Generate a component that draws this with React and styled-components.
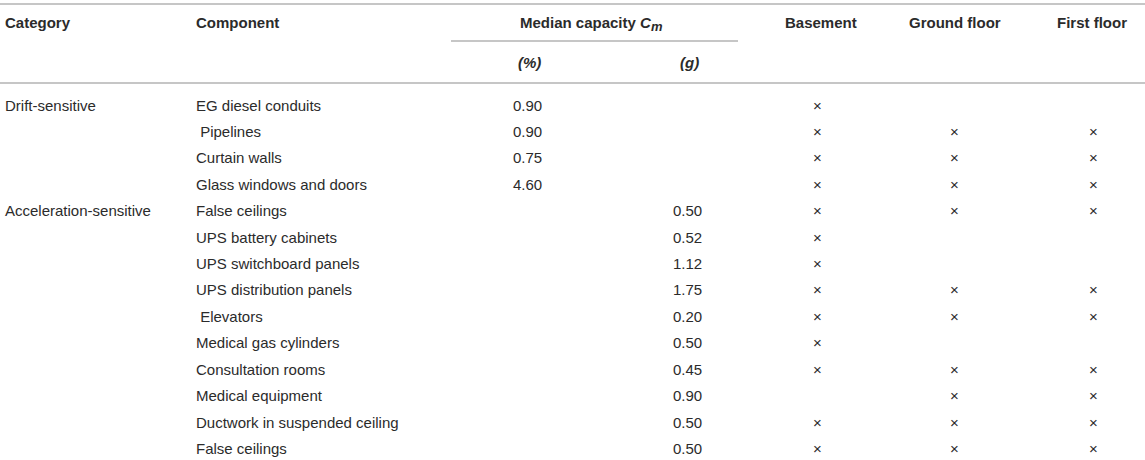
import styled, { createGlobalStyle } from 'styled-components'

const GlobalStyle = createGlobalStyle`
  html, body {
    margin: 0;
    padding: 0;
    background: #ffffff;
  }
  body {
    font-family: "Liberation Sans", Arial, sans-serif;
    color: #2b2b2b;
  }
`

const X = '\u00d7'

const COLS = [
  { width: 196, pad: 5 },
  { width: 255, pad: 0 },
  { width: 144, pad: 62 },
  { width: 143, pad: 78 },
  { width: 142, pad: 75 },
  { width: 160, pad: 70 },
  { width: 105, pad: 49 },
]

const HEAD_PAD = [5, 0, 67, 85, 47, 29, 17]

const rows = [
  ['Drift-sensitive', 'EG diesel conduits', '0.90', '', X, '', ''],
  ['', '\u00a0Pipelines', '0.90', '', X, X, X],
  ['', 'Curtain walls', '0.75', '', X, X, X],
  ['', 'Glass windows and doors', '4.60', '', X, X, X],
  ['Acceleration-sensitive', 'False ceilings', '', '0.50', X, X, X],
  ['', 'UPS battery cabinets', '', '0.52', X, '', ''],
  ['', 'UPS switchboard panels', '', '1.12', X, '', ''],
  ['', 'UPS distribution panels', '', '1.75', X, X, X],
  ['', '\u00a0Elevators', '', '0.20', X, X, X],
  ['', 'Medical gas cylinders', '', '0.50', X, '', ''],
  ['', 'Consultation rooms', '', '0.45', X, X, X],
  ['', 'Medical equipment', '', '0.90', '', X, X],
  ['', 'Ductwork in suspended ceiling', '', '0.50', X, X, X],
  ['', 'False ceilings', '', '0.50', X, X, X],
]

const Page = styled.div`
  padding-top: 3px;
`

const Table = styled.table`
  width: 1145px;
  table-layout: fixed;
  border-collapse: collapse;
  font-size: 15px;
`

const HeadRow = styled.tr`
  height: ${(p) => p.$h}px;
`

const HeadCell = styled.th`
  font-weight: bold;
  font-style: ${(p) => (p.$italic ? 'italic' : 'normal')};
  text-align: left;
  vertical-align: ${(p) => (p.$top ? 'top' : 'middle')};
  padding: ${(p) => (p.$top ? '9px' : '0')} 0 0 ${(p) => p.$pad}px;
  border-top: ${(p) => (p.$topLine ? '2px solid #c6c6c6' : 'none')};
  border-bottom: ${(p) => (p.$line ? '2px solid #c6c6c6' : 'none')};
  white-space: nowrap;
`

const Row = styled.tr`
  height: ${(p) => (p.$first ? 35.5 : 26.46)}px;
`

const Cell = styled.td`
  padding: ${(p) => (p.$first ? 9 : 0)}px 0 0 ${(p) => p.$pad}px;
  text-align: left;
  vertical-align: middle;
  white-space: nowrap;
  line-height: 18px;
`

const Sub = styled.sub`
  font-size: 13px;
  vertical-align: -3px;
`

export default function App() {
  return (
    <Page>
      <GlobalStyle />
      <Table>
        <colgroup>
          {COLS.map((c, i) => (
            <col key={i} style={{ width: c.width }} />
          ))}
        </colgroup>
        <thead>
          <HeadRow $h={37}>
            <HeadCell rowSpan={2} $top $topLine $line $pad={HEAD_PAD[0]}>
              Category
            </HeadCell>
            <HeadCell rowSpan={2} $top $topLine $line $pad={HEAD_PAD[1]}>
              Component
            </HeadCell>
            <HeadCell colSpan={2} $top $topLine $line $pad={69}>
              Median capacity{' '}
              <i>
                C<Sub>m</Sub>
              </i>
            </HeadCell>
            <HeadCell rowSpan={2} $top $topLine $line $pad={HEAD_PAD[4]}>
              Basement
            </HeadCell>
            <HeadCell rowSpan={2} $top $topLine $line $pad={HEAD_PAD[5]}>
              Ground floor
            </HeadCell>
            <HeadCell rowSpan={2} $top $topLine $line $pad={HEAD_PAD[6]}>
              First floor
            </HeadCell>
          </HeadRow>
          <HeadRow $h={42}>
            <HeadCell $italic $line $pad={HEAD_PAD[2]}>
              (%)
            </HeadCell>
            <HeadCell $italic $line $pad={HEAD_PAD[3]}>
              (g)
            </HeadCell>
          </HeadRow>
        </thead>
        <tbody>
          {rows.map((r, i) => (
            <Row key={i} $first={i === 0}>
              {r.map((v, j) => (
                <Cell key={j} $first={i === 0} $pad={COLS[j].pad}>
                  {v}
                </Cell>
              ))}
            </Row>
          ))}
        </tbody>
      </Table>
    </Page>
  )
}
